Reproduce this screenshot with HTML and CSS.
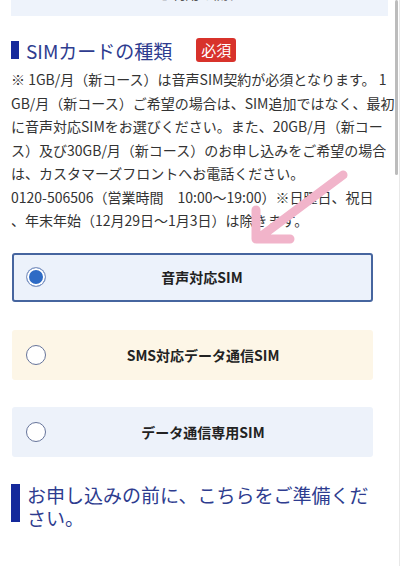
FILE: index.html
```html
<!DOCTYPE html>
<html lang="ja">
<head>
  <meta charset="UTF-8">
  <meta name="viewport" content="width=device-width, initial-scale=1.0">
  <title>SIMカードの種類</title>
  <link rel="stylesheet" href="styles.css">
</head>
<body>
  <div class="page">
    <div class="prev-box">ご利用の流れ</div>

    <h2 class="section-title">
      <span>SIMカードの種類</span>
      <span class="required">必須</span>
    </h2>
    <p class="note">※ 1GB/月（新コース）は音声SIM契約が必須となります。 1<br>GB/月（新コース）ご希望の場合は、SIM追加ではなく、最初<br>に音声対応SIMをお選びください。また、20GB/月（新コー<br>ス）及び30GB/月（新コース）のお申し込みをご希望の場合<br>は、カスタマーズフロントへお電話ください。<br>0120-506506（営業時間　10:00〜19:00）※日曜日、祝日<br>、年末年始（12月29日〜1月3日）は除きます。</p>

    <div class="options">
      <label class="option option-selected">
        <input type="radio" name="sim" checked>
        <span class="option-label">音声対応SIM</span>
      </label>
      <label class="option option-sms">
        <input type="radio" name="sim">
        <span class="option-label">SMS対応データ通信SIM</span>
      </label>
      <label class="option option-data">
        <input type="radio" name="sim">
        <span class="option-label">データ通信専用SIM</span>
      </label>
    </div>

    <h2 class="section-title section-title-long">お申し込みの前に、こちらをご準備ください。</h2>

    <!-- hand drawn arrow on top of the text -->
    <svg class="arrow" width="400" height="566" viewBox="0 0 400 566">
      <path d="M343 175 L260 237 M256 210 L256 239 L290 239" fill="none" stroke="#f1b4ca" stroke-width="9" stroke-linecap="round" stroke-linejoin="round"/>
    </svg>
  </div>
  <div class="scroll-thumb"></div>
</body>
</html>
```

FILE: styles.css
```css
body {
  margin: 0;
  padding: 0;
  background-color: #fff;
  font-family: "Noto Sans CJK JP", "Noto Sans", sans-serif;
  color: #333;
  height: 566px;
  overflow: hidden;
}
.page {
  position: relative;
  display: flow-root;
  padding: 0 11px 0 11px;
  height: 566px;
  border-right: 1px solid #e8e8e8;
  box-sizing: border-box;
}

.prev-box {
  margin-top: -28px;
  padding: 8px 0 10px;
  line-height: 26px;
  font-size: 14px;
  color: #555;
  text-align: center;
  background-color: #eef3fb;
}

.section-title {
  display: flex;
  align-items: center;
  margin: 22px 0 6px;
  height: 24px;
  font-size: 19px;
  font-weight: normal;
  color: #2e3c8f;
}
.section-title::before {
  content: "";
  flex: none;
  width: 8px;
  height: 18px;
  margin-right: 7px;
  background-color: #15299b;
}
.required {
  margin-left: 24px;
  padding: 0 5px;
  line-height: 24px;
  font-size: 15px;
  color: #fff;
  background-color: #d8322b;
  border-radius: 3px;
}

.note {
  margin: 0;
  font-size: 14px;
  line-height: 23.5px;
  white-space: nowrap;
  color: #333;
}

.options {
  display: flex;
  flex-direction: column;
  gap: 27px;
  margin: 20px 15px 0 1px;
}
.option {
  display: flex;
  align-items: center;
  height: 50px;
  padding-left: 14px;
  box-sizing: border-box;
  border-radius: 3px;
}
.option-selected {
  height: 49px;
  padding-left: 12px;
  border: 2px solid #46659f;
  background-color: #ecf2fb;
  margin-bottom: 1px;
}
.option-sms {
  background-color: #fdf6e7;
}
.option-data {
  background-color: #edf2fa;
}
.option input {
  appearance: none;
  -webkit-appearance: none;
  flex: none;
  width: 20px;
  height: 20px;
  margin: 0;
  border: 1px solid #66749a;
  border-radius: 50%;
  background-color: #fff;
}
.option input:checked {
  border-color: #8b9bc0;
  background-color: #2e6bc5;
  box-shadow: inset 0 0 0 2px #fff;
}
.option-label {
  flex: 1;
  padding-right: 13px;
  text-align: center;
  font-size: 14px;
  font-weight: bold;
  color: #222;
}

.section-title-long {
  display: flex;
  align-items: stretch;
  height: auto;
  margin: 26px 0 0;
  font-size: 19px;
  line-height: 23px;
  padding-right: 4px;
}
.section-title-long::before {
  width: 9px;
  height: auto;
  margin: 1px 7px 7px 0;
}

.arrow {
  position: absolute;
  top: 0;
  left: 0;
  pointer-events: none;
}

.scroll-thumb {
  position: fixed;
  top: 0;
  right: 2px;
  width: 3px;
  height: 175px;
  border-radius: 2px;
  background-color: #bcbcbc;
}
```
